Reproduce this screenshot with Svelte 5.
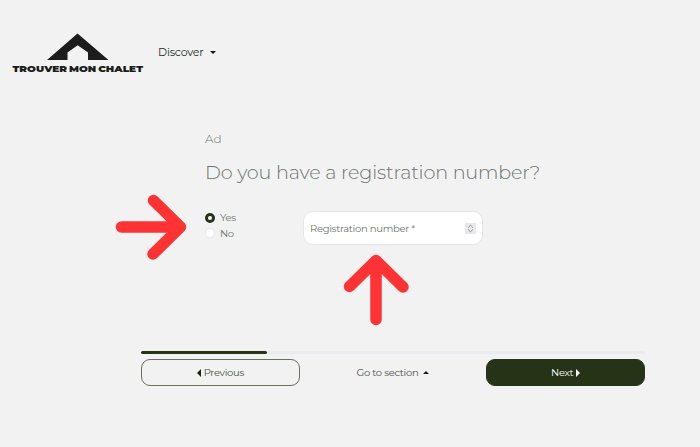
<script>
  const options = ['Yes', 'No'];

  let answer = $state('Yes');
  let progress = $state(25);
</script>

<div class="page">
  <header>
    <svg class="logo" width="134" height="44" viewBox="0 0 134 44" role="img" aria-label="Trouver mon chalet">
      <path d="M35 27 L65.5 0.5 L96.5 27 H76 V19.5 L65.7 12.3 L55.5 19.5 V27 Z" fill="#1b1c1b" />
      <text x="0.5" y="38.8" textLength="130.5" lengthAdjust="spacingAndGlyphs">TROUVER MON CHALET</text>
    </svg>
    <a class="discover" href="#discover"><span>Discover</span><i class="caret down"></i></a>
  </header>

  <main>
    <p class="step">Ad</p>
    <h1><span>Do you have a registration number?</span></h1>

    <div class="fields">
      <div class="options">
        {#each options as option}
          <label>
            <input type="radio" name="registered" value={option} bind:group={answer} />
            <span>{option}</span>
          </label>
        {/each}
      </div>

      <div class="number-field">
        <span>Registration number *</span>
        <svg width="11" height="11" viewBox="0 0 11 11">
          <rect width="11" height="11" fill="#e7e7ec" />
          <path d="M3.5 4.5 V4 L5.5 2.3 L7.5 4 V4.5 M3.5 6.5 V7 L5.5 8.7 L7.5 7 V6.5" fill="none" stroke="#77777d" stroke-width="0.8" />
        </svg>
      </div>
    </div>
  </main>

  <footer>
    <div class="progress"><div class="bar" style="width: {progress}%"></div></div>
    <div class="actions">
      <button class="btn outline"><i class="caret left"></i><span>Previous</span></button>
      <button class="btn section"><span>Go to section</span><i class="caret up"></i></button>
      <button class="btn solid"><span>Next</span><i class="caret right"></i></button>
    </div>
  </footer>

  <svg class="arrow arrow-right" width="74" height="70" viewBox="0 0 74 70">
    <path d="M6.5 33 H64 M38.5 6.5 L65.5 33 L38 60" />
  </svg>
  <svg class="arrow arrow-up" width="70" height="76" viewBox="0 0 70 76">
    <path d="M33 67.5 V9 M6.5 34.5 L33 8.5 L60 35" />
  </svg>
</div>

<style>
  :global(body) {
    margin: 0;
    background: #f2f2f2;
  }

  .page {
    position: relative;
    box-sizing: border-box;
    width: 700px;
    height: 447px;
    overflow: hidden;
    background: #f2f2f2;
    color: #6d736d;
    font-family: "Montserrat", "Inter", sans-serif;
    font-size: 10px;
    letter-spacing: -0.3px;
  }

  header {
    display: flex;
    align-items: flex-start;
    padding: 33px 0 0 12px;
    height: 44px;
  }

  .logo text {
    font-family: "Montserrat", "Inter", sans-serif;
    font-size: 9px;
    font-weight: 900;
    letter-spacing: 0;
    word-spacing: -1px;
    fill: #1b1c1b;
  }

  .discover {
    display: flex;
    align-items: center;
    gap: 6px;
    margin: 12px 0 0 12px;
    height: 14px;
    color: #26302b;
    font-size: 11px;
    letter-spacing: -0.2px;
    line-height: 15px;
    text-decoration: none;
  }

  .caret {
    display: inline-block;
    width: 0;
    height: 0;
    border: 3px solid transparent;
  }

  .caret.down {
    border-top-color: #111;
    border-bottom: 0;
  }

  .caret.up {
    border-bottom-color: #1b1c1b;
    border-top: 0;
  }

  .caret.left {
    border-width: 4px;
    border-right-color: #172608;
    border-left: 0;
  }

  .caret.right {
    border-width: 4px;
    border-left-color: #fff;
    border-right: 0;
  }

  main {
    margin-left: 205px;
    padding-top: 54px;
    height: 220px;
  }

  .step {
    margin: 0;
    font-size: 12px;
    font-weight: 300;
    letter-spacing: 0;
    line-height: 16px;
  }

  h1 {
    margin: 12px 0 0;
    font-size: 19.2px;
    font-weight: 300;
    letter-spacing: -0.18px;
    line-height: 26px;
    white-space: nowrap;
  }

  .fields {
    display: flex;
    margin-top: 26px;
  }

  .options {
    width: 98px;
    margin-top: -1px;
  }

  label {
    display: flex;
    align-items: center;
    gap: 5px;
    height: 15.5px;
    line-height: 15px;
  }

  input {
    appearance: none;
    box-sizing: border-box;
    width: 10px;
    height: 10px;
    margin: 0;
    border: 0.5px solid #e6e8ea;
    border-radius: 50%;
    background: #fff;
  }

  input:checked {
    border: 3px solid #263317;
  }

  .number-field {
    display: flex;
    box-sizing: border-box;
    align-items: center;
    justify-content: space-between;
    width: 180px;
    height: 34px;
    padding: 0 6px;
    border: 1px solid #e5e7e7;
    border-radius: 10px;
    background: #fff;
    white-space: nowrap;
  }

  footer {
    width: 504px;
    margin-left: 141px;
  }

  .progress {
    height: 3px;
    border-radius: 2px;
    background: #e9ebee;
  }

  .bar {
    height: 3px;
    border-radius: 2px;
    background: #263317;
  }

  .actions {
    display: flex;
    gap: 14px;
    margin-top: 5px;
  }

  .btn {
    display: flex;
    box-sizing: border-box;
    align-items: center;
    justify-content: center;
    gap: 3px;
    width: 159px;
    height: 27px;
    padding: 0;
    border: 1px solid transparent;
    border-radius: 9px;
    background: none;
    color: #4b5246;
    font-family: inherit;
    font-size: 10px;
    letter-spacing: inherit;
    white-space: nowrap;
  }

  .outline {
    border-color: #68705f;
  }

  .section {
    gap: 5px;
    color: #4b5050;
  }

  .solid {
    background: #263317;
    border-color: #263317;
    color: #fff;
  }

  .arrow {
    position: absolute;
  }

  .arrow path {
    fill: none;
    stroke: #ff3334;
    stroke-width: 11.5;
    stroke-linecap: round;
    stroke-linejoin: round;
  }

  .arrow-right {
    left: 115px;
    top: 194px;
  }

  .arrow-up {
    left: 343px;
    top: 252px;
  }
</style>
